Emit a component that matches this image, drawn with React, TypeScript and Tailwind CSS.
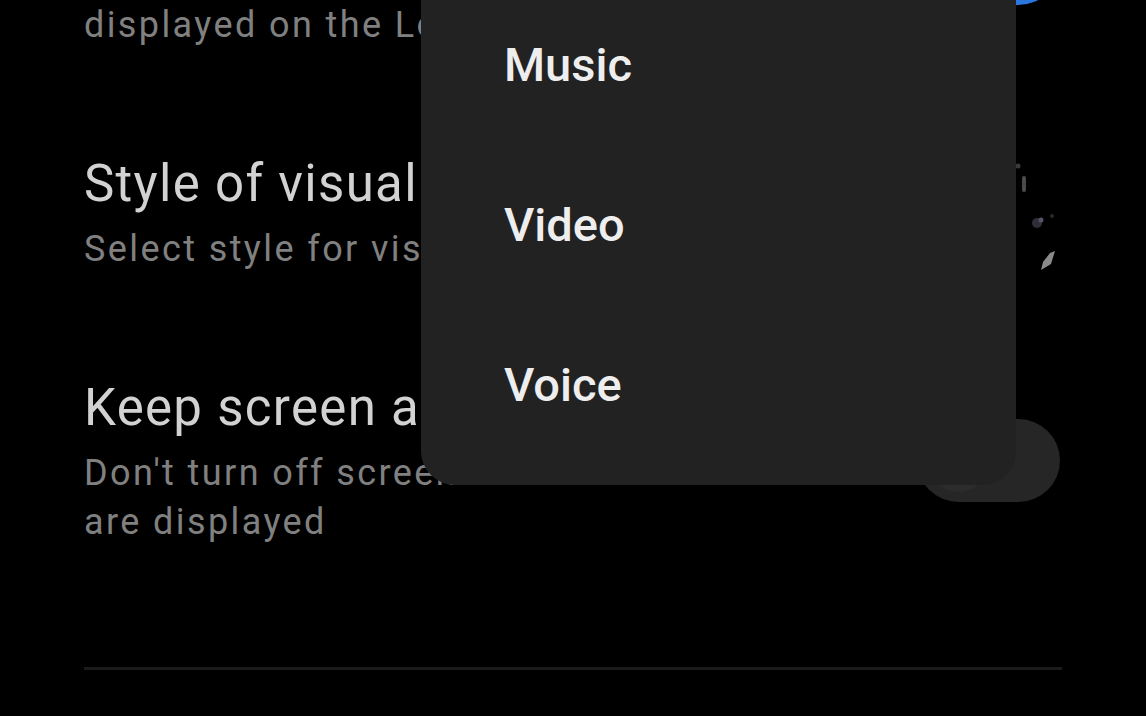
import React from 'react';

type Row = {
  title: string;
  lines: string[];
  right: 'on' | 'off' | 'thumb';
};

const rows: Row[] = [
  {
    title: 'Show on Lock screen',
    lines: ['Allow visual effects to be', 'displayed on the Lock screen'],
    right: 'on',
  },
  {
    title: 'Style of visual effects',
    lines: ['Select style for visual effects'],
    right: 'thumb',
  },
  {
    title: 'Keep screen awake',
    lines: ["Don't turn off screen when visual effects are displayed"],
    right: 'off',
  },
];

function Toggle({ on }: { on: boolean }) {
  return (
    <div
      className={`-mt-[4px] flex h-[83px] w-[143px] shrink-0 items-center rounded-full px-[10px] ${
        on ? 'justify-end bg-[#2a77e0]' : 'justify-start bg-[#262626]'
      }`}
    >
      <span className={`h-[63px] w-[63px] rounded-full ${on ? 'bg-white' : 'bg-[#2c2c2c]'}`} />
    </div>
  );
}

// dim preview image of the visual effect style
function Thumb() {
  return (
    <svg width="143" height="120" viewBox="0 0 143 120" className="shrink-0">
      <rect width="143" height="120" fill="#000" />
      <circle cx="101" cy="12" r="2.5" fill="#3a3a3a" />
      <rect x="105" y="22" width="4" height="16" rx="2" fill="#4a4a4a" />
      <circle cx="120" cy="69" r="5" fill="#2f2f3a" />
      <circle cx="124" cy="66" r="2.5" fill="#55556a" />
      <circle cx="135" cy="62" r="2" fill="#2a2a2a" />
      <path d="M124 116 L134 110 L138 97 L133 99 L126 108 Z" fill="#8a8a8a" />
    </svg>
  );
}

export default function App() {
  return (
    <div
      className="relative h-[716px] w-[1146px] overflow-hidden bg-black"
      style={{ fontFamily: 'Roboto, "Noto Sans", sans-serif' }}
    >
      {/* Settings list (scrolled, first row partly above the screen) */}
      <div className="-mt-[171px] flex flex-col">
        {rows.map((row) => (
          <div key={row.title} className="flex items-center gap-[40px] py-[52px] pl-[84px] pr-[86px]">
            <div className="min-w-0 flex-1">
              <div className="text-[51px] leading-[60px] tracking-[1.3px] whitespace-nowrap text-[#d2d2d2]">
                {row.title}
              </div>
              <div className="mt-[11px] text-[36px] leading-[49px] tracking-[2.4px] text-[#808080]">
                {row.lines.map((l, i) => (
                  <React.Fragment key={i}>
                    {i > 0 && <br />}
                    {l}
                  </React.Fragment>
                ))}
              </div>
            </div>
            {row.right === 'thumb' ? <Thumb /> : <Toggle on={row.right === 'on'} />}
          </div>
        ))}
        <div className="mx-[84px] mt-[68px] h-[3px] bg-[#1b1b1b]" />
      </div>

      {/* Dropdown menu */}
      <div className="absolute left-[421px] top-[-48px] w-[595px] rounded-[34px] bg-[#222222] pt-[32px] pb-[21px]">
        {['Music', 'Video', 'Voice'].map((item) => (
          <div key={item} className="flex h-[160px] items-center pl-[83px]">
            <span className="text-[47px] font-medium leading-none text-[#eeeeee]">{item}</span>
          </div>
        ))}
      </div>
    </div>
  );
}
